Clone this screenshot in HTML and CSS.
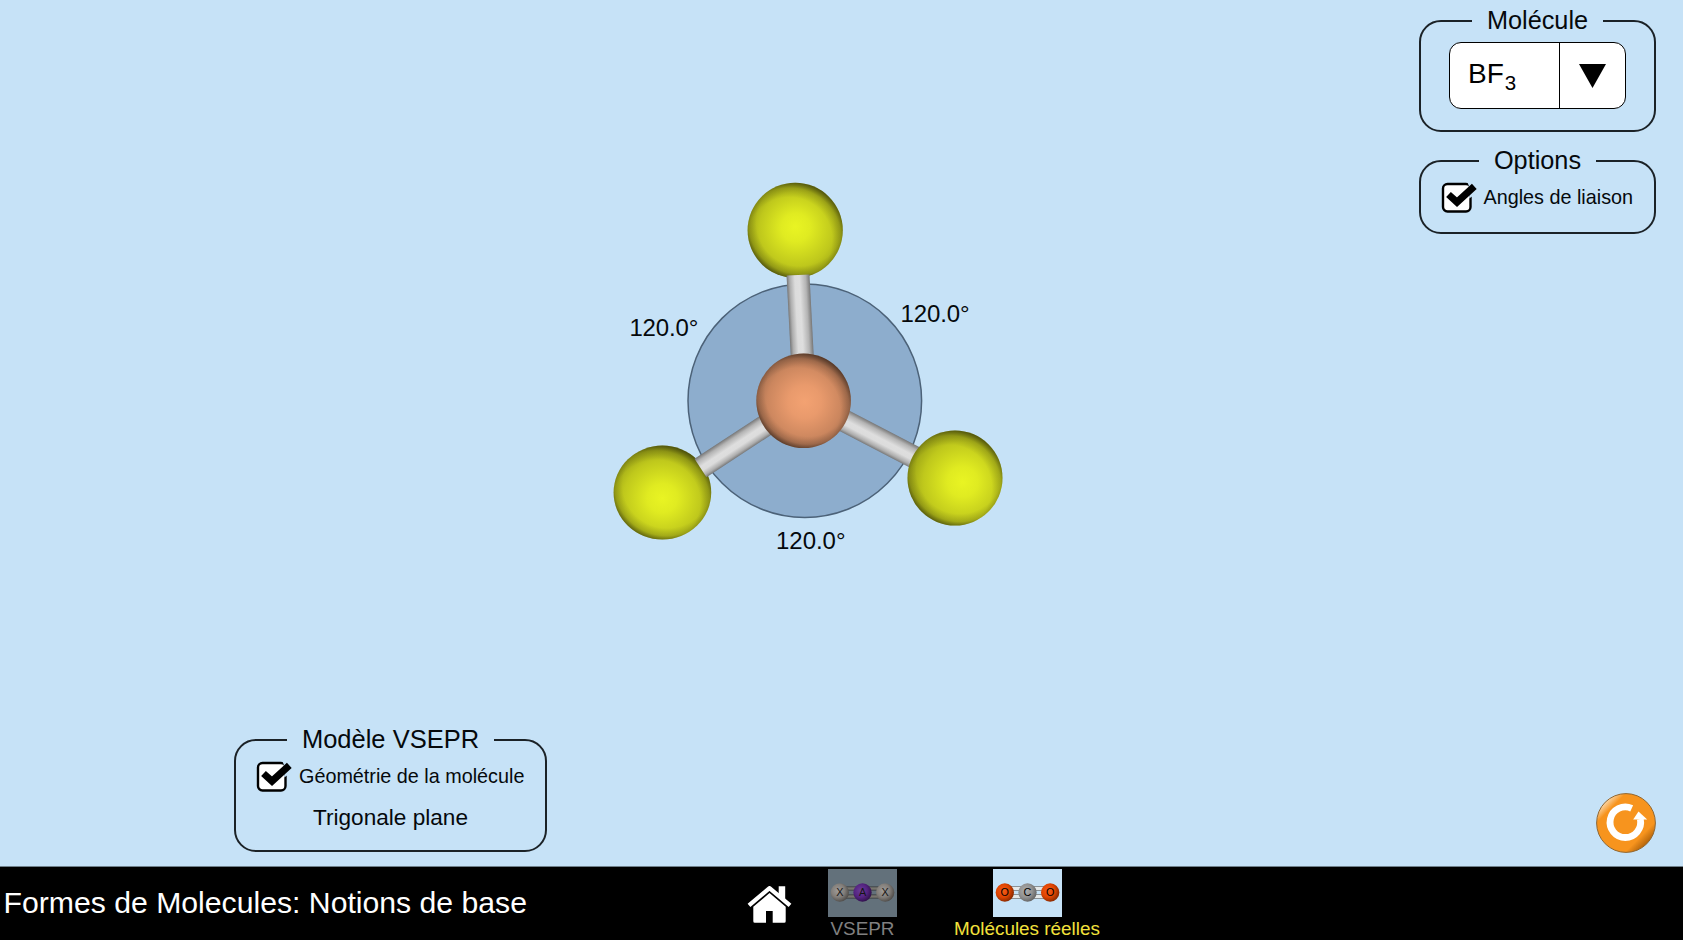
FILE: index.html
```html
<!DOCTYPE html>
<html lang="fr">
<head>
<meta charset="utf-8">
<title>Formes de Molecules: Notions de base</title>
<link rel="stylesheet" href="styles.css">
</head>
<body>
<main class="stage">
  <fieldset class="panel panel-vsepr">
    <legend>Modèle VSEPR</legend>
    <div class="check">
      <svg class="check-icon" width="37" height="36" viewBox="0 0 37 36"><rect x="2" y="5" width="27.5" height="27.5" rx="4.5" fill="#fff" stroke="#000" stroke-width="2.4"/><path d="M26.500 3L36 5V14L28.200 19.500V8Z" class="notch"/><path d="M7.500 15.500L16 23.200L33.300 7.300" fill="none" stroke="#000" stroke-width="7"/></svg>
      <span>Géométrie de la molécule</span>
    </div>
    <div class="geometry">Trigonale plane</div>
  </fieldset>

  <svg class="molecule" width="872" height="866" viewBox="547 0 872 866">
    <defs>
      <radialGradient id="fluorine" cx=".52" cy=".5" r=".6" fx=".5" fy=".46">
        <stop offset="0" stop-color="#e9f423"/><stop offset=".25" stop-color="#e0eb21"/><stop offset=".65" stop-color="#bfc81c"/><stop offset="1" stop-color="#8b9214"/>
      </radialGradient>
      <radialGradient id="fluorineLow" cx=".5" cy=".56" r=".62">
        <stop offset="0" stop-color="#e9f423"/><stop offset=".25" stop-color="#e0eb21"/><stop offset=".65" stop-color="#bfc81c"/><stop offset="1" stop-color="#8b9214"/>
      </radialGradient>
      <radialGradient id="fluorineRight" cx=".58" cy=".54" r=".64">
        <stop offset="0" stop-color="#e9f423"/><stop offset=".25" stop-color="#e0eb21"/><stop offset=".65" stop-color="#bfc81c"/><stop offset="1" stop-color="#8b9214"/>
      </radialGradient>
      <radialGradient id="boron" cx=".51" cy=".51" r=".58">
        <stop offset="0" stop-color="#f3a272"/><stop offset=".3" stop-color="#e99a6c"/><stop offset=".68" stop-color="#cb865e"/><stop offset="1" stop-color="#96664a"/>
      </radialGradient>
      <radialGradient id="shadeTop" cx=".44" cy=".6" r=".62">
        <stop offset=".72" stop-color="#000" stop-opacity="0"/><stop offset=".88" stop-color="#000" stop-opacity=".17"/><stop offset="1" stop-color="#000" stop-opacity=".55"/>
      </radialGradient>
      <radialGradient id="shadeBottom" cx=".55" cy=".42" r=".6">
        <stop offset=".76" stop-color="#000" stop-opacity="0"/><stop offset=".9" stop-color="#000" stop-opacity=".15"/><stop offset="1" stop-color="#000" stop-opacity=".5"/>
      </radialGradient>
      <linearGradient id="bond" x1="0" x2="0" y1="0" y2="1">
        <stop offset="0" stop-color="#777"/><stop offset=".18" stop-color="#b4b4b4"/><stop offset=".45" stop-color="#dedede"/><stop offset=".65" stop-color="#dcdcdc"/><stop offset=".87" stop-color="#adadad"/><stop offset="1" stop-color="#777"/>
      </linearGradient>
    </defs>
    <circle cx="804.8" cy="400.7" r="116.8" fill="#8dadcd" stroke="#4c6278" stroke-width="1.5"/>
    <circle cx="795.2" cy="230.3" r="47.6" fill="url(#fluorine)"/>
    <circle cx="795.2" cy="230.3" r="47.6" fill="url(#shadeTop)"/>
    <circle cx="795.2" cy="230.3" r="47.6" fill="url(#shadeBottom)"/>
    <ellipse cx="662.4" cy="492.6" rx="48.8" ry="47" fill="url(#fluorineLow)"/>
    <ellipse cx="662.4" cy="492.6" rx="48.8" ry="47" fill="url(#shadeTop)"/>
    <ellipse cx="662.4" cy="492.6" rx="48.8" ry="47" fill="url(#shadeBottom)"/>
    <rect x="0" y="-11.5" width="86" height="23" fill="url(#bond)" transform="translate(798 275) rotate(87)"/>
    <rect x="0" y="-11" width="86" height="22" fill="url(#bond)" transform="translate(700.5 468) rotate(-33.2)"/>
    <rect x="0" y="-11.3" width="90" height="22.6" fill="url(#bond)" transform="translate(838 417.5) rotate(27.5)"/>
    <circle cx="803.6" cy="400.7" r="47.3" fill="url(#boron)"/>
    <circle cx="803.6" cy="400.7" r="47.3" fill="url(#shadeTop)"/>
    <circle cx="803.6" cy="400.7" r="47.3" fill="url(#shadeBottom)"/>
    <circle cx="955" cy="478" r="47.5" fill="url(#fluorineRight)"/>
    <circle cx="955" cy="478" r="47.5" fill="url(#shadeTop)"/>
    <circle cx="955" cy="478" r="47.5" fill="url(#shadeBottom)"/>
    <g class="angle">
      <text x="629.4" y="335.8" textLength="69">120.0°</text>
      <text x="900.5" y="322" textLength="69">120.0°</text>
      <text x="776" y="548.5" textLength="69.500">120.0°</text>
    </g>
  </svg>

  <div class="controls">
    <fieldset class="panel panel-molecule">
      <legend>Molécule</legend>
      <div class="combo">
        <span class="formula">BF<sub>3</sub></span>
        <span class="arrow"><svg width="27" height="24" viewBox="0 0 27 24"><path d="M0 0H27L13.5 24Z"/></svg></span>
      </div>
    </fieldset>
    <fieldset class="panel panel-options">
      <legend>Options</legend>
      <div class="check">
        <svg class="check-icon" width="37" height="36" viewBox="0 0 37 36"><rect x="2" y="5" width="27.5" height="27.5" rx="4.5" fill="#fff" stroke="#000" stroke-width="2.4"/><path d="M26.500 3L36 5V14L28.200 19.500V8Z" class="notch"/><path d="M7.500 15.500L16 23.200L33.300 7.300" fill="none" stroke="#000" stroke-width="7"/></svg>
        <span>Angles de liaison</span>
      </div>
    </fieldset>
    <svg class="reset" width="62" height="62" viewBox="0 0 62 62">
      <defs>
        <linearGradient id="orange" x1=".15" y1=".15" x2=".85" y2=".85"><stop offset="0" stop-color="#fbd3a0"/><stop offset=".14" stop-color="#f7941e"/><stop offset=".84" stop-color="#f7941e"/><stop offset="1" stop-color="#b5650a"/></linearGradient>
      </defs>
      <circle cx="31" cy="31" r="29.4" fill="url(#orange)" stroke="#8f6733" stroke-width="1"/>
      <path d="M36.700 16.300A15.300 15.300 0 1 0 45.300 27" fill="none" stroke="#fff" stroke-width="6.800"/>
      <path d="M38.200 27.500L43.500 19.500L52.200 27.500Z" fill="#fff"/>
    </svg>
  </div>
</main>

<footer class="navbar">
  <div class="title">Formes de Molecules: Notions de base</div>
  <svg class="home" width="46" height="38" viewBox="0 0 46 38" fill="#fff"><path d="M22.500 7L38.700 20.800V35.200Q38.700 36.700 37.200 36.700H25.700V25H19V36.700H7.800Q6.300 36.700 6.300 35.200V20.800Z"/><path d="M31.700 .3H38.200V14L31.700 8.500Z"/><path d="M2 19.300L22.500 2.200L43 19.300" fill="none" stroke="#fff" stroke-width="4.300" stroke-linejoin="round"/></svg>
  <div class="tab tab-vsepr">
    <svg width="69" height="48" viewBox="0 0 70 48" preserveAspectRatio="none">
      <defs>
        <radialGradient id="tabGray" cx=".4" cy=".4" r=".65"><stop offset="0" stop-color="#a09c98"/><stop offset=".55" stop-color="#827e7a"/><stop offset="1" stop-color="#4a4744"/></radialGradient>
        <radialGradient id="tabPurple" cx=".4" cy=".4" r=".65"><stop offset="0" stop-color="#6c3c97"/><stop offset=".55" stop-color="#542381"/><stop offset="1" stop-color="#2d0f46"/></radialGradient>
      </defs>
      <rect width="70" height="48" fill="#63717b"/>
      <path d="M16 19.500H54M16 27.500H54" stroke="#353535" stroke-width="4"/><path d="M16 19.500H54M16 27.500H54" stroke="#77756f" stroke-width="2.600"/>
      <circle cx="12" cy="23.500" r="9.300" fill="url(#tabGray)"/><circle cx="35" cy="23.500" r="9.300" fill="url(#tabPurple)"/><circle cx="58" cy="23.500" r="9.300" fill="url(#tabGray)"/>
      <g class="atom dark"><text x="12" y="27.300">X</text><text x="35" y="27.300">A</text><text x="58" y="27.300">X</text></g>
    </svg>
    <span>VSEPR</span>
  </div>
  <div class="tab tab-real">
    <svg width="69" height="48" viewBox="0 0 70 48" preserveAspectRatio="none">
      <defs>
        <radialGradient id="tabOxygen" cx=".4" cy=".4" r=".65"><stop offset="0" stop-color="#f65c18"/><stop offset=".55" stop-color="#df4401"/><stop offset="1" stop-color="#7d2600"/></radialGradient>
        <radialGradient id="tabCarbon" cx=".4" cy=".4" r=".65"><stop offset="0" stop-color="#aeaeae"/><stop offset=".55" stop-color="#929292"/><stop offset="1" stop-color="#606060"/></radialGradient>
      </defs>
      <rect width="70" height="48" fill="#c6e2f7"/>
      <path d="M16 19.500H54M16 27.500H54" stroke="#777" stroke-width="4.400"/><path d="M16 19.500H54M16 27.500H54" stroke="#e4e8e9" stroke-width="3"/>
      <circle cx="12" cy="23.500" r="9.300" fill="url(#tabOxygen)"/><circle cx="35" cy="23.500" r="9.300" fill="url(#tabCarbon)"/><circle cx="58" cy="23.500" r="9.300" fill="url(#tabOxygen)"/>
      <g class="atom"><text x="12" y="27.300">O</text><text x="35" y="27.300">C</text><text x="58" y="27.300">O</text></g>
    </svg>
    <span>Molécules réelles</span>
  </div>
</footer>
</body>
</html>
```

FILE: styles.css
```css
* { box-sizing: border-box; }

body {
  margin: 0;
  width: 1683px;
  height: 940px;
  overflow: hidden;
  display: flex;
  flex-direction: column;
  background: #c6e2f7;
  color: #05090c;
  font-family: "Liberation Sans", Arial, sans-serif;
}

svg { display: block; flex: none; }

.stage {
  display: grid;
  grid-template-columns: 313px 872px 237px;
  height: 867px;
  padding-left: 234px;
  border-bottom: 1px solid #6f808b;
}

.panel {
  margin: 0;
  padding: 0;
  min-width: 0;
  border: 2px solid #1b2227;
  border-radius: 22px;
}

.panel legend {
  margin: 0 auto;
  padding: 0 14.5px 2px;
  font-size: 25.3px;
  line-height: 28px;
}

.panel-vsepr {
  align-self: end;
  height: 127px;
  margin-bottom: 14px;
}

.panel-vsepr legend { font-size: 25.5px; }

.check {
  display: flex;
  align-items: center;
  gap: 6px;
  font-size: 19.8px;
  line-height: 36px;
  white-space: nowrap;
}

.notch { fill: #c6e2f7; }

.panel-vsepr .check { padding-left: 20px; margin-top: 3px; }

.geometry {
  margin-top: 10px;
  text-align: center;
  font-size: 22.6px;
  line-height: 28px;
}

.controls {
  display: flex;
  flex-direction: column;
  padding-top: 6px;
}

.panel-molecule { height: 126px; }

.panel-options { height: 88px; margin-top: 14px; }

.panel-options .check { padding-left: 19.5px; margin-top: 2.5px; }

.combo {
  display: flex;
  width: 177px;
  height: 67px;
  margin: 6px 0 0 28px;
  border: 1.5px solid #000;
  border-radius: 12px;
  background: #fff;
  color: #000;
}

.formula {
  flex: 1;
  padding: 10px 0 0 18px;
  font-size: 28px;
  line-height: 42px;
}

.formula sub {
  position: relative;
  top: 7px;
  margin-left: 1px;
  font-size: 20.5px;
  line-height: 0;
  vertical-align: baseline;
}

.arrow {
  display: grid;
  place-items: center;
  width: 66px;
  border-left: 1.5px solid #000;
}

.controls .reset { margin: auto -1px 12px auto; }

.angle {
  font-size: 24px;
  fill: #05090c;
}

.navbar {
  display: flex;
  align-items: flex-start;
  height: 73px;
  background: #000;
}

.title {
  width: 747px;
  padding: 16px 0 0 3.5px;
  color: #fff;
  font-size: 30.2px;
  line-height: 40px;
  white-space: nowrap;
}

.home { margin-top: 19px; }

.tab {
  display: flex;
  flex-direction: column;
  align-items: center;
  padding-top: 2px;
  font-size: 18.9px;
  line-height: 24px;
  white-space: nowrap;
}

.tab-vsepr { width: 139px; color: #808080; }

.tab-real { width: 190px; color: #f2e13b; }

.atom {
  font-size: 11px;
  fill: #000;
  text-anchor: middle;
}

.atom.dark { fill: #151515; }
```
